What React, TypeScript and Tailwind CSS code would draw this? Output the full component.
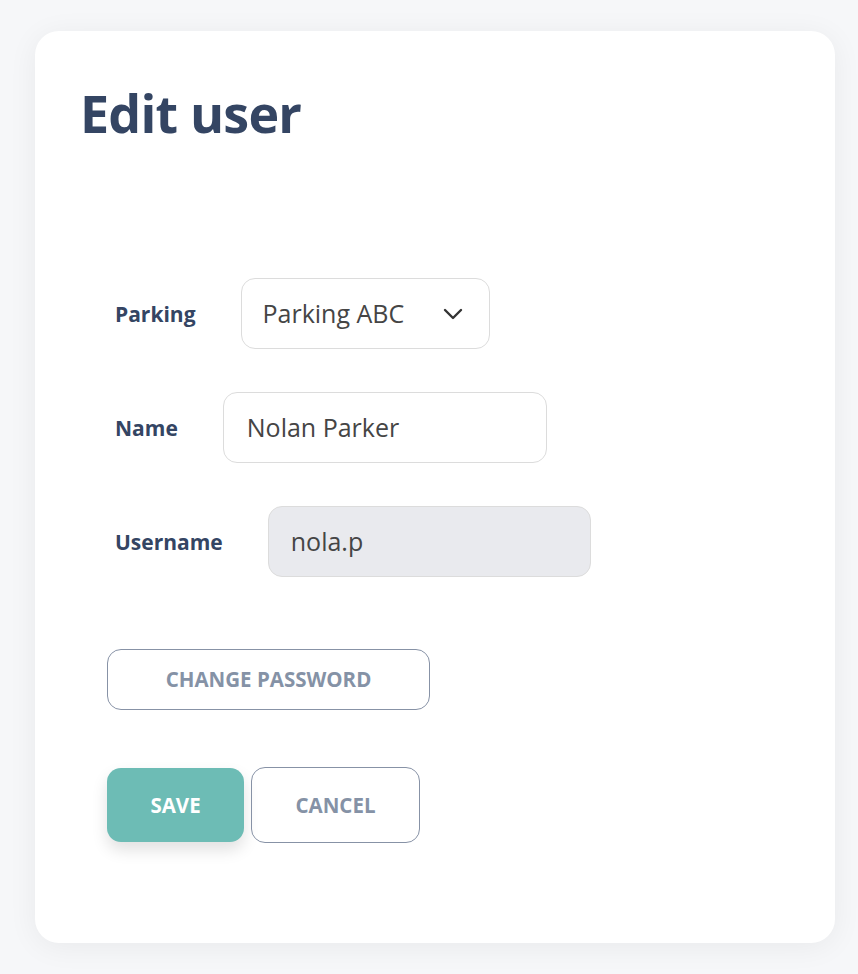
const Field = ({ label, children }: { label: string; children: React.ReactNode }) => (
  <div className="flex items-center">
    <span className="mr-[45px] pt-[2px] text-[21px] font-bold text-[#344563]">{label}</span>
    {children}
  </div>
)

const Chevron = () => (
  <svg width="20" height="12" viewBox="0 0 20 12" fill="none" className="text-[#333]">
    <polyline points="2,2 10,10 18,2" stroke="currentColor" strokeWidth="2.4" strokeLinecap="round" strokeLinejoin="round" />
  </svg>
)

export default function App() {
  return (
    <div className="min-h-[974px] bg-[#f6f7f9] pt-[31px] pl-[35px] pb-[31px] font-['Open_Sans',sans-serif]">
      <div className="w-[800px] h-[912px] rounded-[24px] bg-white shadow-[0_4px_30px_rgba(0,0,0,0.06)] pl-[45px] pt-[46px]">
        <h1 className="text-[52px] leading-[72px] font-bold tracking-[-0.8px] text-[#344563]">Edit user</h1>

        <div className="ml-[35px] mt-[129px] flex flex-col gap-[43px]">
          <Field label="Parking">
            <div className="w-[249px] h-[71px] rounded-[14px] border border-[#dcdcdc] flex items-center justify-between pl-[21px] pr-[26px] text-[25px] text-[#454545]">
              <span>Parking ABC</span>
              <Chevron />
            </div>
          </Field>
          <Field label="Name">
            <div className="w-[324px] h-[71px] rounded-[14px] border border-[#dcdcdc] flex items-center pl-[23px] text-[25px] text-[#454545]">
              Nolan Parker
            </div>
          </Field>
          <Field label="Username">
            <div className="w-[323px] h-[71px] rounded-[14px] border border-[#dcdcdc] bg-[#e9eaee] flex items-center pl-[22px] text-[25px] text-[#454545]">
              nola.p
            </div>
          </Field>
        </div>

        <div className="ml-[27px] mt-[72px]">
          <button className="w-[323px] h-[61px] rounded-[14px] border border-[#8792a6] text-[20.5px] font-bold text-[#8592a6]">
            CHANGE PASSWORD
          </button>
          <div className="mt-[57px] flex items-center gap-[7px]">
            <button className="w-[137px] h-[74px] rounded-[14px] bg-[#6dbcb5] text-[20.5px] font-bold text-white shadow-[0_8px_16px_rgba(0,0,0,0.12)]">
              SAVE
            </button>
            <button className="w-[169px] h-[76px] rounded-[14px] border border-[#8792a6] text-[20.5px] font-bold text-[#8592a6]">
              CANCEL
            </button>
          </div>
        </div>
      </div>
    </div>
  )
}
